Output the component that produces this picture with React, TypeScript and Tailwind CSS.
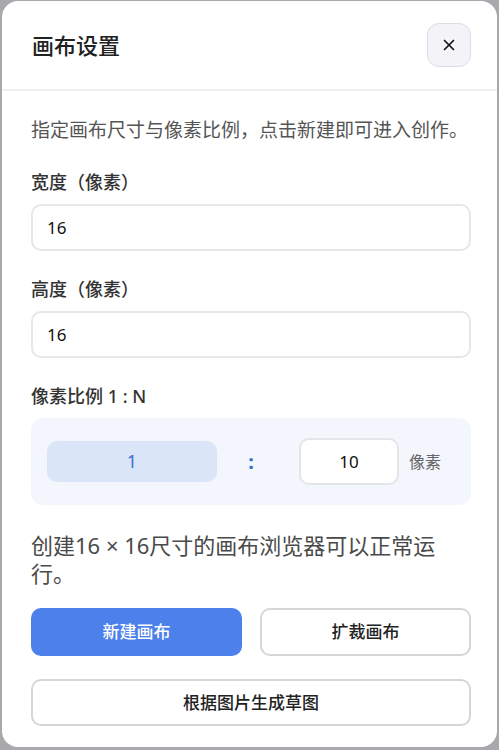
import { X } from "lucide-react";

const font = { fontFamily: '"Noto Sans", "Noto Sans CJK SC", sans-serif' };

const Field = ({ label, value }: { label: string; value: string }) => (
  <div className="flex flex-col">
    <label className="text-[18px] leading-[26px] font-medium text-[#333]">{label}</label>
    <input
      readOnly
      value={value}
      className="mt-[9px] h-[47px] w-full rounded-[10px] border-2 border-[#e6e7ea] bg-white px-[14px] text-[17px] text-[#111] outline-none"
    />
  </div>
);

export default function App() {
  return (
    <div
      className="h-screen w-full bg-[#a9a9ad] pl-[2px] pr-[2px] pt-px pb-[3px]"
      style={font}
    >
      <div className="flex h-full flex-col rounded-2xl bg-white">
        <header className="flex h-[90px] items-center justify-between border-b-2 border-[#f0f0f2] pl-[30px] pr-[26px]">
          <h2 className="text-[22px] font-medium text-[#222]">画布设置</h2>
          <button className="flex h-[44px] w-[44px] items-center justify-center rounded-[12px] border border-[#dcdde6] bg-[#f4f4f8] text-[#111]">
            <X size={18} strokeWidth={2.2} />
          </button>
        </header>

        <div className="flex flex-col pl-[29px] pr-[26px]">
          <p className="mt-[26px] text-[19px] leading-[26px] text-[#555]">
            指定画布尺寸与像素比例，点击新建即可进入创作。
          </p>

          <div className="mt-[26px]">
            <Field label="宽度（像素）" value="16" />
          </div>
          <div className="mt-[25px]">
            <Field label="高度（像素）" value="16" />
          </div>

          <div className="mt-[25px] text-[18px] leading-[26px] font-medium text-[#333]">
            像素比例 1 : N
          </div>
          <div className="mt-[9px] flex h-[87px] items-center rounded-[12px] bg-[#f3f6fc] px-4">
            <div className="flex h-[41px] w-[170px] items-center justify-center rounded-[10px] bg-[#dae6f7] text-[18px] text-[#3d6fd1]">
              1
            </div>
            <div className="w-[68px] text-center text-[20px] font-bold text-[#3d6fd1]">:</div>
            <input
              readOnly
              value="10"
              className="ml-[14px] h-[47px] w-[100px] rounded-[10px] border-2 border-[#e3e5e9] bg-white text-center text-[17px] text-[#111] outline-none"
            />
            <span className="ml-[10px] text-[16px] text-[#666]">像素</span>
          </div>

          <p className="mt-[26px] text-[22px] leading-[28px] text-[#4a4a4a]">
            创建16 × 16尺寸的画布浏览器可以正常运行。
          </p>

          <div className="mt-[21px] grid grid-cols-2 gap-[18px]">
            <button className="h-[48px] rounded-[10px] bg-[#4c80ea] text-[17px] font-medium text-white">
              新建画布
            </button>
            <button className="h-[48px] rounded-[10px] border-2 border-[#d4d6da] bg-white text-[17px] font-medium text-[#222]">
              扩裁画布
            </button>
          </div>
          <button className="mt-[23px] h-[47px] w-full rounded-[10px] border-2 border-[#d4d6da] bg-white text-[17px] font-medium text-[#222]">
            根据图片生成草图
          </button>
        </div>
      </div>
    </div>
  );
}
